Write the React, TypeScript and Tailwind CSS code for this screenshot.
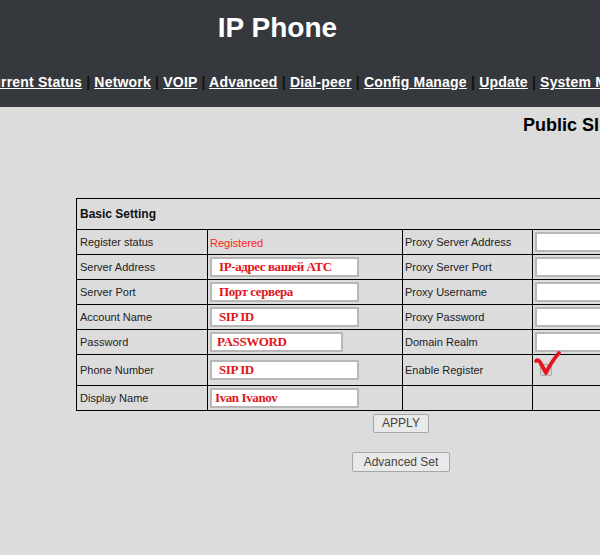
import type { ReactNode } from "react";

const NAV = [
  "Current Status",
  "Network",
  "VOIP",
  "Advanced",
  "Dial-peer",
  "Config Manage",
  "Update",
  "System Manage",
];

function Field({ value, width = "w-[149px]", pad = "pl-[7px]" }: { value?: string; width?: string; pad?: string }) {
  return (
    <input
      readOnly
      value={value ?? ""}
      className={`block h-[20px] ${width} ${pad} border-2 border-[#b7b7b7] bg-white text-[13px] font-bold tracking-[-0.4px] text-[#e0161c] outline-none`}
      style={{ fontFamily: '"Liberation Serif", "Times New Roman", serif' }}
    />
  );
}

function Row({
  label,
  value,
  right,
  extra,
  tall,
}: {
  label: string;
  value: ReactNode;
  right?: string;
  extra?: ReactNode;
  tall?: boolean;
}) {
  return (
    <tr className={tall ? "h-[31px]" : "h-[25px]"}>
      <td className="border border-black px-[3px] text-[11px] text-[#222]">{label}</td>
      <td className="border border-black px-[2px]">{value}</td>
      <td className="border border-black px-[2px] text-[11px] text-[#222]">{right}</td>
      <td className="relative border border-black px-[2px]">{extra}</td>
    </tr>
  );
}

export default function App() {
  return (
    <div
      className="w-full min-h-[555px] overflow-hidden bg-[#dcdcdc]"
      style={{ fontFamily: '"Liberation Sans", Arial, sans-serif' }}
    >
      <header className="h-[107px] bg-[#35383c]">
        <h1 className="w-[555px] pt-[14px] text-center text-[28px] font-bold leading-[28px] text-white">IP Phone</h1>
        <nav className="mt-[33px] ml-[-18px] whitespace-nowrap text-[14px] font-bold leading-[14px] tracking-[0.2px] text-white">
          {NAV.map((item, i) => (
            <span key={item}>
              {i > 0 && <span className="text-[#111]"> | </span>}
              <a className="underline">{item}</a>
            </span>
          ))}
        </nav>
      </header>

      <h2 className="ml-[523px] mt-[9px] whitespace-nowrap text-[18px] font-bold leading-[18px] text-black">
        Public SIP Account
      </h2>

      <div className="ml-[76px] mt-[64px] w-[650px]">
        <table className="w-[650px] table-fixed border-collapse border border-black">
          <colgroup>
            <col className="w-[131px]" />
            <col className="w-[195px]" />
            <col className="w-[130px]" />
            <col className="w-[194px]" />
          </colgroup>
          <tbody>
            <tr className="h-[31px]">
              <td colSpan={4} className="border border-black px-[3px] text-[12px] font-bold text-[#111]">
                Basic Setting
              </td>
            </tr>
            <Row
              label="Register status"
              value={<span className="text-[11px] text-[#ff2424]">Registered</span>}
              right="Proxy Server Address"
              extra={<Field />}
            />
            <Row label="Server Address" value={<Field value="IP-адрес вашей АТС" />} right="Proxy Server Port" extra={<Field />} />
            <Row label="Server Port" value={<Field value="Порт сервера" />} right="Proxy Username" extra={<Field />} />
            <Row label="Account Name" value={<Field value="SIP ID" />} right="Proxy Password" extra={<Field />} />
            <Row
              label="Password"
              value={<Field value="PASSWORD" width="w-[133px]" pad="pl-[5px]" />}
              right="Domain Realm"
              extra={<Field />}
            />
            <Row
              label="Phone Number"
              value={<Field value="SIP ID" />}
              right="Enable Register"
              tall
              extra={
                <>
                  <span className="ml-[5px] block h-[12px] w-[12px] rounded-[2px] border border-[#a8a8a8] bg-[#d6d6d6]" />
                  <svg className="absolute left-0 top-[-5px]" width="30" height="27" viewBox="0 0 30 27">
                    <path
                      d="M3 11 Q5 9 7 12 L13 23 Q18 12 26 3"
                      fill="none"
                      stroke="#e3161f"
                      strokeWidth="3.8"
                      strokeLinecap="round"
                      strokeLinejoin="round"
                    />
                  </svg>
                </>
              }
            />
            <Row label="Display Name" value={<Field value="Ivan Ivanov" pad="pl-[3px]" />} />
          </tbody>
        </table>

        <div className="mt-[3px] flex flex-col items-center">
          <button className="h-[19px] rounded-[2px] border border-[#a6a6a6] bg-[#e9e9e9] px-[8px] text-[12px] leading-[17px] text-[#444]">
            APPLY
          </button>
          <button className="mt-[19px] h-[20px] rounded-[2px] border border-[#a6a6a6] bg-[#e9e9e9] px-[11px] text-[12px] leading-[18px] text-[#444]">
            Advanced Set
          </button>
        </div>
      </div>
    </div>
  );
}
